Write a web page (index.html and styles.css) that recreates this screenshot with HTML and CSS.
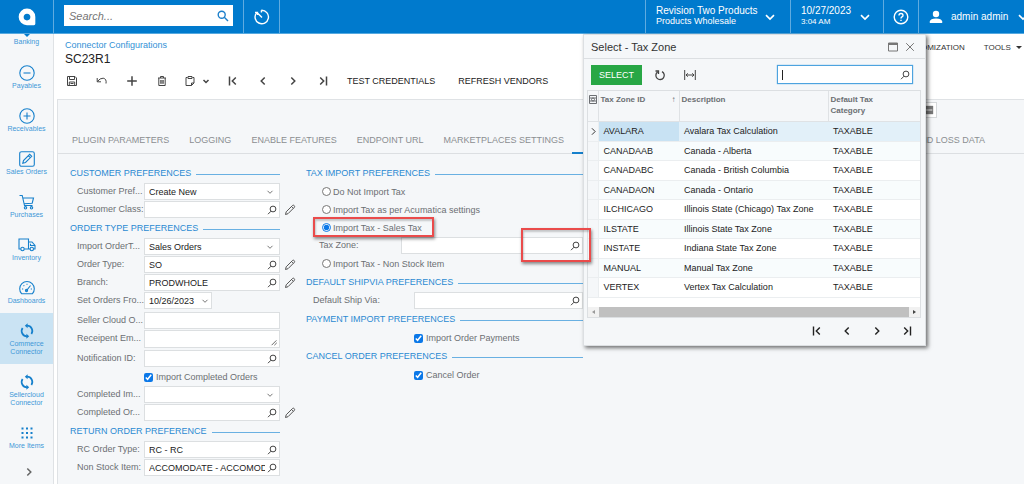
FILE: index.html
```html
<!DOCTYPE html>
<html lang="en">
<head>
<meta charset="utf-8">
<title>Connector Configurations - SC23R1</title>
<link rel="stylesheet" href="styles.css">
</head>
<body>
<svg class="sprite" aria-hidden="true">
  <symbol id="lens" viewBox="0 0 10 10"><circle cx="6" cy="4" r="2.9"/><path d="M4 6.2 1 9.2"/></symbol>
  <symbol id="down" viewBox="0 0 10 10"><path d="M2.5 3.8 5 6.3 7.5 3.8"/></symbol>
  <symbol id="pencil" viewBox="0 0 12 12"><path d="M1.5 10.5 2.2 7.8 8.6 1.4Q9.4.8 10.2 1.6 11 2.5 10.4 3.3L4 9.7ZM7.6 2.5 9.4 4.3"/></symbol>
  <symbol id="first" viewBox="0 0 12 12"><path d="M2.5 1.5V10.5M8.8 2.5 5.3 6 8.8 9.5"/></symbol>
  <symbol id="prev" viewBox="0 0 12 12"><path d="M7.7 2.5 4.2 6 7.7 9.5"/></symbol>
  <symbol id="next" viewBox="0 0 12 12"><path d="M4.3 2.5 7.8 6 4.3 9.5"/></symbol>
  <symbol id="last" viewBox="0 0 12 12"><path d="M9.5 1.5V10.5M3.2 2.5 6.7 6 3.2 9.5"/></symbol>
  <symbol id="sync" viewBox="0 0 18 18"><path d="M9 3.700A5.300 5.300 0 0 1 13.400 12M9 14.300A5.300 5.300 0 0 1 4.600 6" stroke-width="1.700"/><path class="solid" d="M9.600 1.200V6.200L6.800 3.700ZM8.400 11.800V16.800L11.200 14.300Z"/></symbol>
</svg>

<header class="topbar">
  <a class="brand" href="#" aria-label="Home"><svg width="18" height="18" viewBox="0 0 16 16"><path fill="#fff" fill-rule="evenodd" d="M8 0.500A7.400 7.400 0 1 0 8 15.300H14.200Q15.400 15.300 15.400 14V8A7.400 7.400 0 0 0 8 .500ZM8 5Q11 5.200 11 8 10.900 10.900 8 11 5.100 10.800 5 8 5.100 5.200 8 5Z"/></svg></a>
  <form class="search">
    <input type="text" placeholder="Search..." aria-label="Search">
    <button type="button" aria-label="Search"><svg width="12" height="12" viewBox="0 0 12 12"><circle cx="4.700" cy="4.700" r="3.500"/><path d="M7.300 7.300 11 11"/></svg></button>
  </form>
  <button class="recent" aria-label="Recent"><svg width="18" height="18" viewBox="0 0 18 18"><path d="M8.400 2.300A6.700 6.700 0 1 1 3.700 4.600M4.200 4.800 9 9.500M2 4.400H4.500V7M8.400 2.300V4.500"/></svg></button>
  <button class="company"><span class="stack"><b>Revision Two Products</b><span>Products Wholesale</span></span><svg class="chev" viewBox="0 0 10 10"><use href="#down"/></svg></button>
  <button class="clock"><span class="stack"><b>10/27/2023</b><small>3:04 AM</small></span><svg class="chev" viewBox="0 0 10 10"><use href="#down"/></svg></button>
  <button class="help" aria-label="Help"><svg width="16" height="16" viewBox="0 0 16 16"><circle cx="8" cy="8" r="6.800"/><path d="M6 6.500Q6 4.500 8 4.500T10 6.400Q10 7.300 8.900 7.900 8 8.400 8 9.500M8 10.800V12"/></svg></button>
  <button class="user"><svg class="person" width="14" height="14" viewBox="0 0 14 14"><circle cx="7" cy="4" r="3.200"/><path d="M.800 13V11.500Q1.300 8.400 7 8.400T13.200 11.500V13Z"/></svg><b>admin admin</b><svg class="chev" viewBox="0 0 10 10"><use href="#down"/></svg></button>
</header>

<div class="body">
  <nav class="rail" aria-label="Modules">
    <a class="cut" href="#">Banking</a>
    <a href="#"><svg viewBox="0 0 18 18"><circle cx="9" cy="9" r="7.200"/><path d="M5.500 9H12.500"/></svg>Payables</a>
    <a href="#"><svg viewBox="0 0 18 18"><circle cx="9" cy="9" r="7.200"/><path d="M5.500 9H12.500M9 5.500V12.500"/></svg>Receivables</a>
    <a href="#"><svg viewBox="0 0 18 18"><rect x="1.700" y="1.700" width="14.600" height="14.600" rx="1.800"/><path d="M4.800 13.200 5.500 10.500 11.700 4.300 13.700 6.300 7.500 12.500ZM10.300 5.700 12.300 7.700"/></svg>Sales Orders</a>
    <a href="#"><svg viewBox="0 0 18 18"><path d="M1.500 2.500H4.200L6.500 12.500H14.500M4.800 5H15.500L14.200 10.200 6 10.700"/><circle cx="7.500" cy="14.800" r="1.200"/><circle cx="13.500" cy="14.800" r="1.200"/></svg>Purchases</a>
    <a href="#"><svg viewBox="0 0 18 18"><path d="M2.800 13H1V3H10.500V13H6.200M10.500 6H14L17 9.500V13H15.500M12 13H10.500M12.500 7.800V9.500H16.800"/><circle cx="4.500" cy="13" r="1.700"/><circle cx="13.800" cy="13" r="1.700"/></svg>Inventory</a>
    <a href="#"><svg viewBox="0 0 18 18"><path d="M3.700 14.800A7.300 7.300 0 1 1 14.300 14.800ZM8.300 11.800 12.500 6.500M4 10H5.200M5.500 6.300 6.300 7M9 4.700V5.800M12.800 10H14"/><circle cx="8.500" cy="11.500" r="1.100"/></svg>Dashboards</a>
    <a class="on" href="#"><svg viewBox="0 0 18 18"><use href="#sync"/></svg>Commerce<br>Connector</a>
    <a href="#"><svg viewBox="0 0 18 18"><use href="#sync"/></svg>Sellercloud<br>Connector</a>
    <a href="#"><svg viewBox="0 0 18 18"><path class="solid" d="M3.500 3.500h2v2h-2zM8 3.500h2v2H8zM12.500 3.500h2v2h-2zM3.500 8h2v2h-2zM8 8h2v2H8zM12.500 8h2v2h-2zM3.500 12.500h2v2h-2zM8 12.500h2v2H8zM12.500 12.500h2v2h-2z"/></svg>More Items</a>
    <button class="expand" aria-label="Expand"><svg viewBox="0 0 12 12"><use href="#next"/></svg></button>
  </nav>

  <main class="page">
    <div class="heading">
      <div>
        <a class="crumb" href="#">Connector Configurations</a>
        <h1>SC23R1</h1>
      </div>
      <div class="links"><button>CUSTOMIZATION</button><button>TOOLS <i class="caret"></i></button></div>
    </div>
    <div class="toolbar">
      <button aria-label="Save"><svg viewBox="0 0 12 12"><path d="M1.500 1.500H9L10.500 3V10.500H1.500ZM3.500 1.500V4.500H8.500V1.500M3.300 10.500V7H8.700V10.500M4.500 8.500H7.500"/></svg></button>
      <button aria-label="Undo"><svg viewBox="0 0 12 12"><path d="M1.200 3V6.800H5M1.400 6.500Q4 3 7.200 3.200 10.800 3.800 10 8.500"/></svg></button>
      <button class="strong" aria-label="Add"><svg viewBox="0 0 12 12"><path d="M6 1.200V10.800M1.200 6H10.800"/></svg></button>
      <button aria-label="Delete"><svg viewBox="0 0 12 12"><path d="M2 3H10M4.500 3V1.500H7.500V3M2.800 3V10.500H9.200V3M4.800 5V8.800M6 5V8.800M7.200 5V8.800"/></svg></button>
      <button class="copy" aria-label="Copy"><svg viewBox="0 0 12 12"><path d="M3.500 2.500H2V10.500H7.500L10 8V2.500H8.500M4 1.500H8V3.500H4ZM7.500 10.500V8H10"/></svg><svg class="strong" viewBox="0 0 12 12"><path d="M3.500 5 6 7.500 8.500 5"/></svg></button>
      <button class="strong" aria-label="First"><svg viewBox="0 0 12 12"><use href="#first"/></svg></button>
      <button class="strong" aria-label="Previous"><svg viewBox="0 0 12 12"><use href="#prev"/></svg></button>
      <button class="strong" aria-label="Next"><svg viewBox="0 0 12 12"><use href="#next"/></svg></button>
      <button class="strong" aria-label="Last"><svg viewBox="0 0 12 12"><use href="#last"/></svg></button>
      <button class="word">TEST CREDENTIALS</button>
      <button class="word">REFRESH VENDORS</button>
    </div>

    <div class="panel">
      <div class="summary"><button aria-label="Collapse"><svg viewBox="0 0 12 12"><path class="solid" d="M0 1H11V11H0Z"/><path d="M1 6H10" stroke="#fff"/></svg></button></div>
      <div class="tabs" role="tablist">
        <button role="tab">PLUGIN PARAMETERS</button>
        <button role="tab">LOGGING</button>
        <button role="tab">ENABLE FEATURES</button>
        <button role="tab">ENDPOINT URL</button>
        <button role="tab">MARKETPLACES SETTINGS</button>
        <button role="tab" class="current" aria-selected="true"></button>
        <button role="tab" class="end">PROFIT AND LOSS DATA</button>
      </div>

      <div class="columns">
        <form class="left">
          <h2>CUSTOMER PREFERENCES</h2>
          <div class="row"><label for="f1">Customer Pref...</label><span class="field"><select id="f1"><option>Create New</option></select><svg class="dd" viewBox="0 0 10 10"><use href="#down"/></svg></span></div>
          <div class="row"><label for="f2">Customer Class:</label><span class="field"><input id="f2" type="text"><svg viewBox="0 0 10 10"><use href="#lens"/></svg></span><button type="button" class="edit" aria-label="Edit"><svg viewBox="0 0 12 12"><use href="#pencil"/></svg></button></div>
          <h2>ORDER TYPE PREFERENCES</h2>
          <div class="row"><label for="f3">Import OrderT...</label><span class="field"><select id="f3"><option>Sales Orders</option></select><svg class="dd" viewBox="0 0 10 10"><use href="#down"/></svg></span></div>
          <div class="row"><label for="f4">Order Type:</label><span class="field"><input id="f4" type="text" value="SO"><svg viewBox="0 0 10 10"><use href="#lens"/></svg></span><button type="button" class="edit" aria-label="Edit"><svg viewBox="0 0 12 12"><use href="#pencil"/></svg></button></div>
          <div class="row"><label for="f5">Branch:</label><span class="field"><input id="f5" type="text" value="PRODWHOLE"><svg viewBox="0 0 10 10"><use href="#lens"/></svg></span><button type="button" class="edit" aria-label="Edit"><svg viewBox="0 0 12 12"><use href="#pencil"/></svg></button></div>
          <div class="row tall"><label for="f6">Set Orders Fro...</label><span class="field date"><select id="f6"><option>10/26/2023</option></select><svg class="dd" viewBox="0 0 10 10"><use href="#down"/></svg></span></div>
          <div class="row"><label for="f7">Seller Cloud O...</label><span class="field"><input id="f7" type="text"></span></div>
          <div class="row tall"><label for="f8">Receipent Em...</label><span class="field"><textarea id="f8" rows="1"></textarea><svg class="grip" viewBox="0 0 10 10"><path d="M2 9 8 3M5.500 9 8.500 6"/></svg></span></div>
          <div class="row"><label for="f9">Notification ID:</label><span class="field"><input id="f9" type="text"><svg viewBox="0 0 10 10"><use href="#lens"/></svg></span></div>
          <div class="row"><label class="tick indent"><input type="checkbox" checked>Import Completed Orders</label></div>
          <div class="row"><label for="f10">Completed Im...</label><span class="field"><select id="f10"><option></option></select><svg class="dd" viewBox="0 0 10 10"><use href="#down"/></svg></span></div>
          <div class="row"><label for="f11">Completed Or...</label><span class="field"><input id="f11" type="text"><svg viewBox="0 0 10 10"><use href="#lens"/></svg></span><button type="button" class="edit" aria-label="Edit"><svg viewBox="0 0 12 12"><use href="#pencil"/></svg></button></div>
          <h2>RETURN ORDER PREFERENCE</h2>
          <div class="row"><label for="f12">RC Order Type:</label><span class="field"><input id="f12" type="text" value="RC - RC"><svg viewBox="0 0 10 10"><use href="#lens"/></svg></span></div>
          <div class="row"><label for="f13">Non Stock Item:</label><span class="field"><input id="f13" type="text" value="ACCOMODATE - ACCOMOD"><svg viewBox="0 0 10 10"><use href="#lens"/></svg></span></div>
        </form>

        <form class="right">
          <h2>TAX IMPORT PREFERENCES</h2>
          <label class="radio"><input type="radio" name="tax">Do Not Import Tax</label>
          <label class="radio"><input type="radio" name="tax">Import Tax as per Acumatica settings</label>
          <label class="radio"><input type="radio" name="tax" checked>Import Tax - Sales Tax<i class="mark around"></i></label>
          <div class="row zone"><label for="z">Tax Zone:</label><span class="field"><input id="z" type="text"><svg viewBox="0 0 10 10"><use href="#lens"/></svg><i class="mark lookup"></i></span></div>
          <label class="radio"><input type="radio" name="tax">Import Tax - Non Stock Item</label>
          <h2>DEFAULT SHIPVIA PREFERENCES</h2>
          <div class="row"><label for="sv">Default Ship Via:</label><span class="field"><input id="sv" type="text"><svg viewBox="0 0 10 10"><use href="#lens"/></svg></span></div>
          <h2>PAYMENT IMPORT PREFERENCES</h2>
          <div class="row"><label class="tick indent"><input type="checkbox" checked>Import Order Payments</label></div>
          <h2>CANCEL ORDER PREFERENCES</h2>
          <div class="row"><label class="tick indent"><input type="checkbox" checked>Cancel Order</label></div>
        </form>
      </div>
    </div>
  </main>
</div>

<section class="dialog" role="dialog" aria-labelledby="dlg">
  <div class="dialog-head">
    <h2 id="dlg">Select - Tax Zone</h2>
    <button aria-label="Maximize"><svg viewBox="0 0 12 12"><path d="M1.500 2H10.500V10H1.500Z"/><path d="M1.500 3H10.500" stroke-width="2"/></svg></button>
    <button aria-label="Close"><svg viewBox="0 0 12 12"><path d="M2.200 2.200 9.800 9.800M9.800 2.200 2.200 9.800"/></svg></button>
  </div>
  <div class="dialog-tools">
    <button class="select">SELECT</button>
    <button class="tool" aria-label="Refresh"><svg viewBox="0 0 12 12"><path d="M8 2.600A4.200 4.200 0 1 1 3.500 3M1.500 2H4.500V5" stroke-width="1.300"/></svg></button>
    <button class="tool" aria-label="Fit columns"><svg viewBox="0 0 12 12"><path d="M.700 1V11M11.300 1V11M2 6H10M3.800 4.300 2 6 3.800 7.700M8.200 4.300 10 6 8.200 7.700"/></svg></button>
    <span class="find"><input type="text" aria-label="Find"><i class="cursor"></i><svg viewBox="0 0 10 10"><use href="#lens"/></svg></span>
  </div>
  <div class="grid">
    <table>
      <colgroup><col class="c0"><col class="c1"><col class="c2"><col></colgroup>
      <thead><tr><th><svg viewBox="0 0 8 9"><path d="M.500.500H7.500V8.500H.500ZM.500 3H7.500M.500 6H7.500"/><circle cx="4" cy="4.500" r="1.500"/></svg></th><th><span class="sort">Tax Zone ID <i>↑</i></span></th><th>Description</th><th>Default Tax<br>Category</th></tr></thead>
      <tbody>
        <tr class="hit"><td><svg viewBox="0 0 12 12"><use href="#next"/></svg></td><td>AVALARA</td><td>Avalara Tax Calculation</td><td>TAXABLE</td></tr>
        <tr><td></td><td>CANADAAB</td><td>Canada - Alberta</td><td>TAXABLE</td></tr>
        <tr><td></td><td>CANADABC</td><td>Canada - British Columbia</td><td>TAXABLE</td></tr>
        <tr><td></td><td>CANADAON</td><td>Canada - Ontario</td><td>TAXABLE</td></tr>
        <tr><td></td><td>ILCHICAGO</td><td>Illinois State (Chicago) Tax Zone</td><td>TAXABLE</td></tr>
        <tr><td></td><td>ILSTATE</td><td>Illinois State Tax Zone</td><td>TAXABLE</td></tr>
        <tr><td></td><td>INSTATE</td><td>Indiana State Tax Zone</td><td>TAXABLE</td></tr>
        <tr><td></td><td>MANUAL</td><td>Manual Tax Zone</td><td>TAXABLE</td></tr>
        <tr><td></td><td>VERTEX</td><td>Vertex Tax Calculation</td><td>TAXABLE</td></tr>
      </tbody>
    </table>
    <div class="scroll"><i class="arrow back"></i><i class="thumb"></i><i class="arrow ahead"></i></div>
  </div>
  <div class="pager">
    <button aria-label="First page"><svg viewBox="0 0 12 12"><use href="#first"/></svg></button>
    <button aria-label="Previous page"><svg viewBox="0 0 12 12"><use href="#prev"/></svg></button>
    <button aria-label="Next page"><svg viewBox="0 0 12 12"><use href="#next"/></svg></button>
    <button aria-label="Last page"><svg viewBox="0 0 12 12"><use href="#last"/></svg></button>
  </div>
</section>
</body>
</html>
```

FILE: styles.css
```css
* { box-sizing: border-box; }
body {
  margin: 0;
  min-height: 100vh;
  display: flex;
  flex-direction: column;
  position: relative;
  overflow: hidden;
  font: 9px/12px "Liberation Sans", Arial, sans-serif;
  color: #333;
  background: #fff;
}
button, input, select, textarea { font: inherit; color: inherit; border: 0; padding: 0; margin: 0; background: none; border-radius: 0; outline: 0; }
a { text-decoration: none; }
h1, h2 { margin: 0; font-weight: normal; }
b { font-weight: normal; }
svg { display: block; flex: none; fill: none; stroke: currentColor; stroke-width: 1; }
.solid { fill: currentColor; stroke: none; }
.sprite { position: absolute; width: 0; height: 0; }

/* top bar */
.topbar { display: flex; height: 34px; background: #007acd; border-bottom: 1px solid #55a9e0; color: #fff; white-space: nowrap; }
.topbar > button { display: flex; align-items: center; border-left: 1px solid #5fabe0; font-size: 10px; text-align: left; }
.topbar svg { stroke-width: 1.4; }
.topbar .chev { width: 16px; height: 16px; stroke-width: 1; }
.brand { width: 54px; display: flex; align-items: center; justify-content: center; border-right: 1px solid #5fabe0; }
.brand svg { stroke: none; }
.search { width: 169px; height: 21px; margin: 5px 10px 0; display: flex; align-items: center; background: #fff; color: #1c7fcb; }
.search input { flex: 1; min-width: 0; padding-left: 5px; font-size: 11px; font-style: italic; }
.search input::placeholder { color: #757575; opacity: 1; }
.search button { padding: 0 4px; }
.topbar .recent { width: 37px; justify-content: center; border-right: 1px solid #5fabe0; }
.stack { display: flex; flex-direction: column; padding-bottom: 1px; line-height: 11px; }
.stack span { font-size: 9px; }
.stack small { font-size: 8px; }
.topbar .company { width: 145px; margin-left: auto; padding: 0 12px 0 10px; justify-content: space-between; }
.topbar .clock { width: 93px; padding: 0 10px; justify-content: space-between; }
.help { width: 35px; justify-content: center; }
.topbar .user { width: 106px; padding-left: 10px; overflow: hidden; }
.user b { margin: 0 7px 0 8px; }
.user .person { fill: #fff; stroke: none; }

.body { flex: 1; display: flex; }

/* module rail */
.rail { width: 54px; background: #f5f7f9; border-right: 1px solid #dfe2e5; font-size: 7px; line-height: 8px; text-align: center; }
.rail a { display: block; padding: 9px 0 8px; color: #3f98d8; }
.rail a svg { width: 18px; height: 18px; margin: 0 auto; color: #1680cc; stroke-width: 1.1; }
.rail .on { background: #cae3f3; }
.rail .cut { padding: 4px 0 9px; position: relative; }
.rail .cut::before { content: ""; position: absolute; top: 0; left: 24px; border: 3px solid transparent; border-top-color: #007acd; border-bottom: 0; }
.expand { display: block; margin: 8px auto 0; padding-left: 4px; color: #666; }
.expand svg { width: 12px; height: 12px; stroke-width: 1.500; }

/* page heading */
.page { flex: 1; min-width: 0; padding-left: 3px; display: flex; flex-direction: column; }
.heading { display: flex; justify-content: space-between; padding: 5px 2px 0 8px; }
.crumb { display: block; color: #3391d6; }
.heading h1 { font-size: 12px; line-height: 16px; color: #222; }
.links { display: flex; gap: 19px; font-size: 8px; align-items: center; align-self: flex-start; padding-top: 3px; }
.caret { display: inline-block; margin-left: 3px; vertical-align: 1px; border: 3px solid transparent; border-top-color: #333; border-bottom: 0; }
.toolbar { display: flex; align-items: center; height: 32px; padding-bottom: 4px; }
.toolbar button { width: 30px; display: flex; justify-content: center; color: #444; }
.toolbar svg { width: 12px; height: 12px; }
.toolbar .strong { stroke-width: 1.500; }
.toolbar .strong svg { stroke-width: 1.500; }
.toolbar .copy { width: 41px; gap: 4px; }
.toolbar .word { width: auto; margin: 0 14px 0 9px; color: #222; }

/* tabs */
.panel { flex: 1; background: #f5f7f9; border: 1px solid #dfe2e5; border-width: 1px 0 0 1px; }
.summary { height: 27px; padding: 2px 87px 0 0; display: flex; justify-content: flex-end; }
.summary button { width: 16px; height: 16px; padding: 1px 2px; background: #fff; border: 1px solid #d5d8da; color: #777; }
.summary svg { width: 10px; height: 12px; }
.tabs { display: flex; gap: 20px; height: 27px; padding: 0 39px 0 14px; border-bottom: 1px solid #dcdfe2; color: #8b8e91; }
.tabs button { white-space: nowrap; }
.tabs .current { width: 60px; margin: 0 0 -1px -12px; border-bottom: 2px solid #1680cc; }
.tabs .end { margin-left: auto; }

/* forms */
.columns { display: flex; padding: 10px 0 8px 12px; color: #6c6f73; }
.left { width: 236px; }
.right { width: 277px; }
.columns h2 { display: flex; align-items: center; gap: 5px; height: 19px; padding-bottom: 2px; font-size: 9px; color: #2b8ad2; white-space: nowrap; }
.columns h2::after { content: ""; flex: 1; margin-top: 4px; border-top: 1px solid #69b0e2; }
.left h2 { width: 210px; }
.row { display: flex; height: 18px; padding-left: 7px; }
.row.tall { height: 20px; }
.row > label { width: 67px; height: 17px; line-height: 17px; white-space: nowrap; }
.field { position: relative; display: flex; align-items: center; width: 136px; height: 17px; background: #fff; border: 1px solid #dcdfe1; color: #222; }
.tall .field:not(.date) { height: 18px; }
.field.date { width: 68px; }
.field input, .field select, .field textarea { flex: 1; min-width: 0; height: 15px; padding: 0 0 0 4px; appearance: none; resize: none; overflow: hidden; }
.field svg { width: 10px; height: 10px; margin: 0 2px; color: #444; }
.field .dd { margin: 0 4px; color: #777; }
.field.date .dd { margin: 0 1px; }
.field .grip { width: 8px; height: 8px; margin: 6px 1px 0; }
.edit { margin-left: 4px; height: 17px; color: #555; }
.edit svg { width: 12px; height: 12px; }
.row > .tick { display: flex; align-items: center; gap: 3px; width: auto; height: 18px; }
.tick input { width: 9px; height: 9px; accent-color: #0b78e8; }
.left .indent { padding-left: 67px; }
.right .row > label { width: 101px; }
.right .row > .indent { width: auto; padding-left: 101px; }
.right .row .field { flex: 1; }
.right .zone { padding-left: 13px; }
.right .zone > label { width: 82px; }
.radio { position: relative; display: flex; align-items: center; gap: 2px; height: 18px; width: 129px; padding-left: 16px; white-space: nowrap; }
.radio input { width: 9px; height: 9px; margin-bottom: 2px; accent-color: #0b78e8; flex: none; }
.mark { position: absolute; border: 2px solid #ea4b4b; box-shadow: 1px 2px 3px rgba(0, 0, 0, .45), inset 1px 2px 2px rgba(0, 0, 0, .2); pointer-events: none; z-index: 5; }
.around { inset: -2px 1px 0 7px; }
.lookup { top: -10px; right: -9px; width: 70px; height: 34px; }

/* lookup dialog */
.dialog { position: absolute; top: 34px; left: 583px; width: 343px; background: #f5f7f9; border: 1px solid #dcdfe2; box-shadow: 2px 2px 4px rgba(0, 0, 0, .55); }
.dialog-head { display: flex; align-items: center; gap: 5px; height: 24px; padding: 0 9px 0 7px; border-bottom: 1px solid #dcdfe2; color: #777; }
.dialog-head h2 { flex: 1; font-size: 11px; color: #333; }
.dialog-head svg { width: 12px; height: 12px; }
.dialog-tools { display: flex; align-items: center; height: 31px; padding: 0 12px 0 7px; }
.select { width: 51px; height: 20px; margin-right: 3px; background: #28a745; color: #fff; }
.tool { width: 30px; display: flex; justify-content: center; color: #444; }
.tool svg { width: 12px; height: 12px; }
.find { display: flex; align-items: center; width: 136px; height: 19px; margin-left: auto; border: 1px solid #4da3df; background: #fff; box-shadow: 0 0 1px #4da3df; position: relative; }
.find input { flex: 1; min-width: 0; padding: 0 4px; }
.find svg { width: 10px; height: 10px; margin-right: 2px; color: #444; }
.cursor { position: absolute; left: 4px; top: 4px; height: 10px; border-left: 1px solid #222; }
.grid { margin: 0 4px 0 3px; border: 1px solid #dcdfe2; background: #fff; }
table { width: 100%; table-layout: fixed; border-collapse: collapse; }
.c0 { width: 10px; }
.c1 { width: 81px; }
.c2 { width: 149px; }
th { height: 30px; padding: 3px 3px 0 2px; background: #f5f7f9; border-right: 1px solid #dfe2e5; border-bottom: 1px solid #dfe2e5; font-size: 8px; line-height: 11px; text-align: left; vertical-align: top; color: #6c6f73; }
th:first-child { padding: 4px 1px 0; }
th:last-child, td:last-child { border-right: 0; }
th svg { width: 8px; height: 9px; }
.sort { display: flex; justify-content: space-between; }
.sort i { font-style: normal; }
td { height: 20px; padding: 0 5px; border-bottom: 1px solid #ebeef0; white-space: nowrap; color: #222; }
tr:nth-child(even) td { height: 19px; background: #f8fcfd; }
td:last-child { padding-left: 5px; }
tbody td:first-child { padding: 0; background: #f5f7f9; border-right: 1px solid #ebeef0; }
td svg { width: 11px; height: 11px; }
tbody .hit td { background: #e2f0f9; }
tbody .hit td:first-child { background: #f5f7f9; }
tbody .hit td:nth-child(2) { background: #c8e2f3; }
.scroll { display: flex; align-items: center; height: 10px; margin-top: 9px; padding: 0 4px; gap: 4px; background: #f1f1f1; }
.thumb { flex: 1; height: 10px; background: #c0c0c0; }
.arrow { border: 2px solid transparent; }
.back { border-right: 3px solid #999; border-left: 0; }
.ahead { border-left: 3px solid #444; border-right: 0; }
.pager { display: flex; justify-content: flex-end; height: 27px; padding-right: 3px; }
.pager button { width: 30px; display: flex; align-items: center; justify-content: center; color: #222; }
.pager svg { width: 12px; height: 12px; stroke-width: 1.400; }
```
